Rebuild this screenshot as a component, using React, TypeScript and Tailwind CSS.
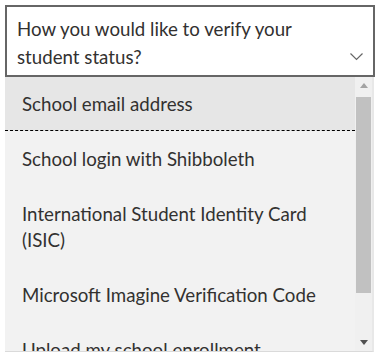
const OPTIONS = [
  'School email address',
  'School login with Shibboleth',
  'International Student Identity Card (ISIC)',
  'Microsoft Imagine Verification Code',
  'Upload my school enrollment documentation',
];

export default function App() {
  return (
    <div className="w-[376px] h-[353px] bg-white overflow-hidden pt-[5px] pl-[5px] font-['Lato',sans-serif] text-[#323130]">
      {/* Select box */}
      <div className="w-[370px] h-[72px] border-2 border-[#666666] flex items-end justify-between pl-[10px] pr-[10px] pt-[8px] pb-[7px]">
        <p className="self-start text-[18.7px] leading-[28px] w-[300px]">
          How you would like to verify your student status?
        </p>
        <svg width="13" height="8" viewBox="0 0 13 8" className="mb-[7px]">
          <path d="M0.5 0.5 L6.5 6.5 L12.5 0.5" fill="none" stroke="#666" strokeWidth="1.2" />
        </svg>
      </div>

      {/* Dropdown list */}
      <div className="w-[369px] h-[275px] flex bg-[#f2f2f2] border-r-2 border-r-[#e8e8e8] border-b border-b-[#dadada] overflow-hidden">
        <ul className="flex-1 min-w-0">
          {OPTIONS.map((o, i) => (
            <li
              key={o}
              className={`pl-[17px] pr-[20px] text-[18.7px] leading-[26px] ${i === 0 ? 'bg-[#e6e6e6] border-b border-dashed border-black pt-[14px] pb-[13px]' : 'py-[14.5px]'}`}
            >
              {o}
            </li>
          ))}
        </ul>

        {/* Scrollbar */}
        <div className="w-[17px] flex flex-col bg-[#f0f0f0]">
          <div className="h-[17px] flex items-center justify-center">
            <svg width="8" height="5" viewBox="0 0 8 5">
              <path d="M0 5 L4 0 L8 5 Z" fill="#a3a3a3" />
            </svg>
          </div>
          <div className="flex-1 pt-[3px] px-[1px]">
            <div className="h-[196px] bg-[#c1c1c1]" />
          </div>
          <div className="h-[17px] flex items-center justify-center">
            <svg width="8" height="5" viewBox="0 0 8 5">
              <path d="M0 0 L8 0 L4 5 Z" fill="#505050" />
            </svg>
          </div>
        </div>
      </div>
    </div>
  );
}
